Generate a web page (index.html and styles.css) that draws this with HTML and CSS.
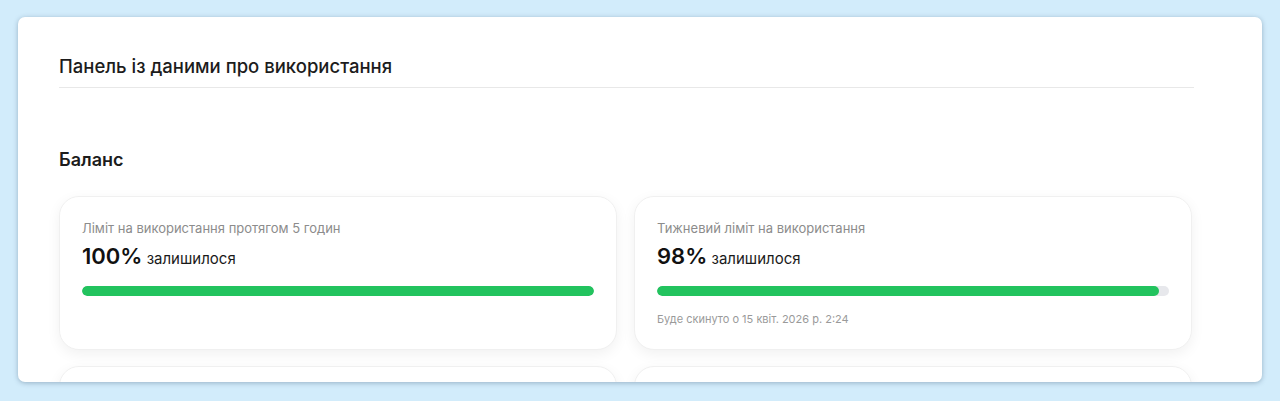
FILE: index.html
```html
<!DOCTYPE html>
<html lang="uk">
<head>
<meta charset="utf-8">
<link rel="stylesheet" href="styles.css">
</head>
<body>
<div class="panel">
  <div class="content">
    <h1 class="title">Панель із даними про використання</h1>
    <h2 class="section">Баланс</h2>
    <div class="grid">
      <div class="card">
        <div class="label">Ліміт на використання протягом 5 годин</div>
        <div class="value"><span class="pct">100%</span> залишилося</div>
        <div class="track"><div class="fill" style="width:100%"></div></div>
      </div>
      <div class="card">
        <div class="label">Тижневий ліміт на використання</div>
        <div class="value"><span class="pct">98%</span> залишилося</div>
        <div class="track"><div class="fill" style="width:98%"></div></div>
        <div class="reset">Буде скинуто о 15 квіт. 2026 р. 2:24</div>
      </div>
      <div class="card card-empty"></div>
      <div class="card card-empty"></div>
    </div>
  </div>
</div>
</body>
</html>
```
FILE: styles.css
```css
* { box-sizing: border-box; }
html, body { margin: 0; padding: 0; }
body {
  background: #d2ecfb;
  font-family: Inter, "Noto Sans", sans-serif;
  height: 401px;
  overflow: hidden;
  padding: 17px 18px 0 18px;
}
.panel {
  background: #fff;
  border-radius: 7px;
  height: 365px;
  overflow: hidden;
  box-shadow: 0 1px 5px rgba(40, 70, 100, 0.35);
}
.content {
  width: 1135px;
  margin-left: 41px;
  padding-top: 37px;
}
.title {
  margin: 0;
  font-size: 18.5px;
  line-height: 24px;
  font-weight: 500;
  color: #1c1c1c;
  padding-bottom: 9px;
  border-bottom: 1px solid #e8e8e8;
}
.section {
  margin: 60px 0 24px 0;
  font-size: 18px;
  line-height: 24px;
  font-weight: 600;
  color: #1c1c1c;
}
.grid {
  display: grid;
  grid-template-columns: 558px 558px;
  column-gap: 17px;
  row-gap: 16px;
}
.card {
  border: 1px solid #f0f0f0;
  border-radius: 20px;
  padding: 22px 22px 22px 22px;
  box-shadow: 0 4px 14px rgba(0, 0, 0, 0.06);
  background: #fff;
}
.card-empty { height: 120px; }
.label {
  font-size: 13px;
  line-height: 18px;
  color: #8c8c8c;
}
.value {
  margin-top: 5px;
  font-size: 15px;
  line-height: 28px;
  color: #1a1a1a;
}
.pct {
  font-size: 22px;
  font-weight: 600;
  color: #111;
}
.track {
  margin-top: 13px;
  height: 10px;
  border-radius: 5px;
  background: #e7e8ec;
  overflow: hidden;
}
.fill {
  height: 100%;
  border-radius: 5px;
  background: #22c35e;
}
.reset {
  margin-top: 15px;
  font-size: 11px;
  line-height: 16px;
  color: #9a9a9a;
}
```
